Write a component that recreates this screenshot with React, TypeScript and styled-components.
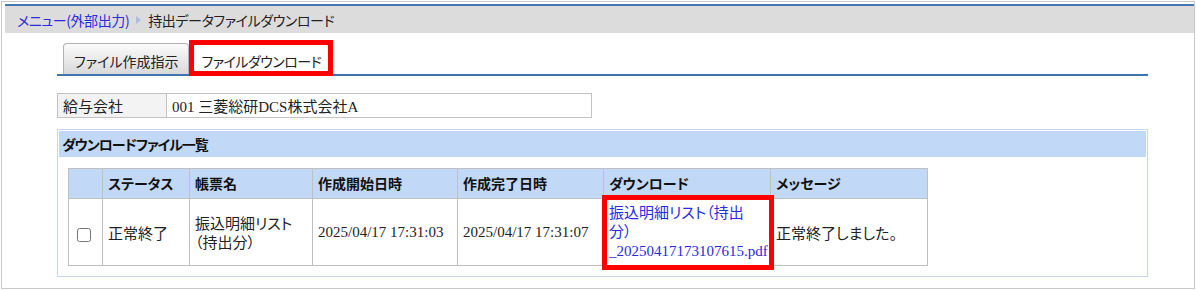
import React from "react";
import styled, { createGlobalStyle } from "styled-components";

const GlobalStyle = createGlobalStyle`
  html, body { margin: 0; padding: 0; background: #ffffff; }
  body {
    font-family: "Noto Sans CJK JP", "Noto Sans", sans-serif;
    color: #222222;
    font-feature-settings: "palt";
  }
  * { box-sizing: border-box; }
`;

const Frame = styled.div`
  margin: 1px;
  width: 1194px;
  height: 288px;
  border: 1px solid #c8c8c8;
  padding: 2px 0 0 3px;
`;

const Breadcrumb = styled.div`
  display: flex;
  align-items: center;
  gap: 7px;
  height: 29px;
  border-top: 2px solid #4577b0;
  background: #dcdcdc;
  padding-left: 12px;
  font-size: 14px;
  letter-spacing: -0.4px;
  line-height: 1;
`;

const CrumbLink = styled.a`
  color: #2a2ae0;
  text-decoration: none;
`;

const CrumbArrow = styled.span`
  width: 0;
  height: 0;
  border-left: 5px solid #a9c0dd;
  border-top: 4px solid transparent;
  border-bottom: 4px solid transparent;
`;

const CrumbCurrent = styled.span`
  color: #222222;
`;

const Content = styled.div`
  width: 1091px;
  margin: 10px 0 0 52px;
`;

const TabBar = styled.div`
  display: flex;
  gap: 4px;
  padding-left: 6px;
  border-bottom: 2px solid #3f74ae;
`;

const Tab = styled.div<{ $active?: boolean; $marked?: boolean }>`
  position: relative;
  height: 31px;
  padding: 3px ${(p) => (p.$active ? "7px" : "10px")} 0;
  display: flex;
  align-items: center;
  border: 1px solid ${(p) => (p.$active ? "#aebccb" : "#b3b3b3")};
  border-bottom: none;
  border-radius: 4px 4px 0 0;
  background: ${(p) =>
    p.$active ? "#ffffff" : "linear-gradient(#fbfbfb, #d9d9d9)"};
  font-size: 14px;
  letter-spacing: ${(p) => (p.$active ? "-0.5px" : "0")};
  color: #222222;
  &::after {
    content: "";
    display: ${(p) => (p.$marked ? "block" : "none")};
    position: absolute;
    left: -5px;
    right: -5px;
    top: -4px;
    bottom: -2px;
    border: 5px solid #ff0000;
  }
`;

const FieldTable = styled.table`
  margin-top: 17px;
  width: 535px;
  border-collapse: collapse;
  font-family: "Liberation Serif", "Noto Sans CJK JP", serif;
  font-size: 15px;
`;

const FieldLabel = styled.th`
  width: 109px;
  height: 24px;
  padding: 0 5px;
  text-align: left;
  font-weight: normal;
  background: #f3f3f3;
  border: 1px solid #c3c3c3;
  font-family: "Noto Sans CJK JP", sans-serif;
`;

const FieldValue = styled.td`
  padding: 0 5px;
  border: 1px solid #c3c3c3;
`;

const Panel = styled.section`
  margin-top: 11px;
  border: 1px solid #c4d8f0;
  padding: 1px 1px 10px 1px;
`;

const PanelHeader = styled.h2`
  margin: 0;
  height: 26px;
  display: flex;
  align-items: center;
  padding-left: 3px;
  background: #c1d8f6;
  font-size: 14px;
  letter-spacing: -1px;
  font-weight: bold;
  color: #111111;
`;

const ListTable = styled.table`
  margin: 11px 0 0 9px;
  width: 860px;
  table-layout: fixed;
  border-collapse: collapse;
  font-size: 15px;
  line-height: 19px;
`;

const HeadRow = styled.tr`
  height: 30px;
  background: #c1d8f6;
`;

const HeadCell = styled.th`
  border: 1px solid #c0c0c0;
  padding: 0 5px;
  text-align: left;
  font-weight: bold;
  font-size: 14px;
  color: #111111;
`;

const BodyRow = styled.tr`
  height: 67px;
`;

const Cell = styled.td<{ $serif?: boolean; $padRight?: number }>`
  position: relative;
  border: 1px solid #c0c0c0;
  padding: 0 ${(p) => p.$padRight ?? 5}px 0 5px;
  vertical-align: middle;
  font-family: ${(p) =>
    p.$serif
      ? '"Liberation Serif", "Noto Sans CJK JP", serif'
      : '"Noto Sans CJK JP", sans-serif'};
`;

const CheckCell = styled.td`
  border: 1px solid #c0c0c0;
  padding: 0 0 0 8px;
  text-align: left;
`;

const Check = styled.input`
  width: 14px;
  height: 14px;
  margin: 3px 0 0 0;
  vertical-align: middle;
`;

const MarkedCell = styled(Cell)`
  &::after {
    content: "";
    position: absolute;
    left: -2px;
    right: -4px;
    top: -4px;
    bottom: -5px;
    border: 5px solid #ff0000;
    pointer-events: none;
  }
`;

const FileLink = styled.a`
  color: #2a2ae0;
  text-decoration: none;
`;

const cols = [34, 87, 123, 145, 146, 167, 157];

export default function App() {
  return (
    <>
      <GlobalStyle />
      <Frame>
        <Breadcrumb>
          <CrumbLink href="#">メニュー(外部出力)</CrumbLink>
          <CrumbArrow />
          <CrumbCurrent>持出データファイルダウンロード</CrumbCurrent>
        </Breadcrumb>
        <Content>
          <TabBar>
            <Tab>ファイル作成指示</Tab>
            <Tab $active $marked>
              ファイルダウンロード
            </Tab>
          </TabBar>
          <FieldTable>
            <tbody>
              <tr>
                <FieldLabel>給与会社</FieldLabel>
                <FieldValue>001 三菱総研DCS株式会社A</FieldValue>
              </tr>
            </tbody>
          </FieldTable>
          <Panel>
            <PanelHeader>ダウンロードファイル一覧</PanelHeader>
            <ListTable>
              <colgroup>
                {cols.map((w, i) => (
                  <col key={i} style={{ width: w }} />
                ))}
              </colgroup>
              <thead>
                <HeadRow>
                  <HeadCell />
                  <HeadCell>ステータス</HeadCell>
                  <HeadCell>帳票名</HeadCell>
                  <HeadCell>作成開始日時</HeadCell>
                  <HeadCell>作成完了日時</HeadCell>
                  <HeadCell>ダウンロード</HeadCell>
                  <HeadCell>メッセージ</HeadCell>
                </HeadRow>
              </thead>
              <tbody>
                <BodyRow>
                  <CheckCell>
                    <Check type="checkbox" />
                  </CheckCell>
                  <Cell>正常終了</Cell>
                  <Cell $padRight={12}>振込明細リスト（持出分）</Cell>
                  <Cell $serif>2025/04/17 17:31:03</Cell>
                  <Cell $serif>2025/04/17 17:31:07</Cell>
                  <MarkedCell $serif $padRight={20}>
                    <FileLink href="#">
                      振込明細リスト（持出分）_20250417173107615.pdf
                    </FileLink>
                  </MarkedCell>
                  <Cell>正常終了しました。</Cell>
                </BodyRow>
              </tbody>
            </ListTable>
          </Panel>
        </Content>
      </Frame>
    </>
  );
}
